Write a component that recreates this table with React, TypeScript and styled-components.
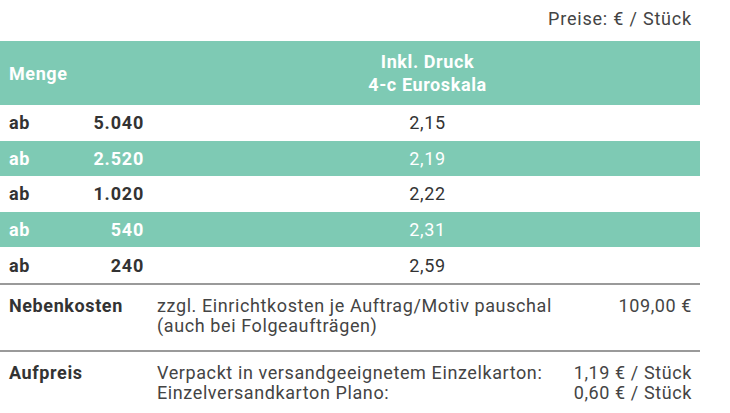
import styled, { createGlobalStyle } from 'styled-components'

const GlobalStyle = createGlobalStyle`
  body {
    margin: 0;
    background: #ffffff;
    font-family: Roboto, "Liberation Sans", sans-serif;
    color: #333333;
  }
`

const Wrapper = styled.div`
  width: 700px;
  font-size: 18px;
  letter-spacing: 0.6px;
`

const UnitNote = styled.div`
  height: 41px;
  line-height: 38px;
  padding-right: 8px;
  text-align: right;
  color: #444444;
  letter-spacing: 0.8px;
`

const PriceTable = styled.table`
  width: 700px;
  border-collapse: collapse;
  table-layout: fixed;
`

const HeadCell = styled.th<{ $center?: boolean }>`
  height: 64px;
  padding: 0 9px;
  background: #7ecab4;
  color: #ffffff;
  font-weight: 700;
  line-height: 23px;
  text-align: ${(p) => (p.$center ? 'center' : 'left')};
  vertical-align: middle;
`

const Row = styled.tr<{ $striped?: boolean }>`
  height: 35.6px;
  background: ${(p) => (p.$striped ? '#7ecab4' : 'transparent')};
  color: ${(p) => (p.$striped ? '#ffffff' : '#333333')};
`

const AbCell = styled.td`
  padding: 0 0 0 9px;
  font-weight: 700;
`

const QtyCell = styled.td`
  padding: 0 11px 0 0;
  font-weight: 700;
  letter-spacing: 0.8px;
  text-align: right;
`

const PriceCell = styled.td`
  text-align: center;
`

const Section = styled.div`
  display: grid;
  grid-template-columns: 148px 1fr auto;
  padding: 11px 8px 14px 9px;
  border-top: 2px solid #9a9a9a;
  line-height: 20px;
`

const Label = styled.div`
  font-weight: 700;
  color: #333333;
`

const Text = styled.div`
  color: #444444;
`

const Amount = styled.div`
  text-align: right;
  color: #444444;
`

const tiers = [
  { qty: '5.040', price: '2,15' },
  { qty: '2.520', price: '2,19' },
  { qty: '1.020', price: '2,22' },
  { qty: '540', price: '2,31' },
  { qty: '240', price: '2,59' }
]

const App = (): JSX.Element => {
  return (
    <Wrapper>
      <GlobalStyle />
      <UnitNote>Preise: € / Stück</UnitNote>
      <PriceTable>
        <colgroup>
          <col style={{ width: 49 }} />
          <col style={{ width: 106 }} />
          <col />
        </colgroup>
        <thead>
          <tr>
            <HeadCell colSpan={2}>Menge</HeadCell>
            <HeadCell $center>
              Inkl. Druck
              <br />
              4-c Euroskala
            </HeadCell>
          </tr>
        </thead>
        <tbody>
          {tiers.map((t, i) => (
            <Row key={t.qty} $striped={i % 2 === 1}>
              <AbCell>ab</AbCell>
              <QtyCell>{t.qty}</QtyCell>
              <PriceCell>{t.price}</PriceCell>
            </Row>
          ))}
        </tbody>
      </PriceTable>
      <Section>
        <Label>Nebenkosten</Label>
        <Text>
          zzgl. Einrichtkosten je Auftrag/Motiv pauschal
          <br />
          (auch bei Folgeaufträgen)
        </Text>
        <Amount>109,00 €</Amount>
      </Section>
      <Section>
        <Label>Aufpreis</Label>
        <Text>
          Verpackt in versandgeeignetem Einzelkarton:
          <br />
          Einzelversandkarton Plano:
        </Text>
        <Amount>
          1,19 € / Stück
          <br />
          0,60 € / Stück
        </Amount>
      </Section>
    </Wrapper>
  )
}

export default App
